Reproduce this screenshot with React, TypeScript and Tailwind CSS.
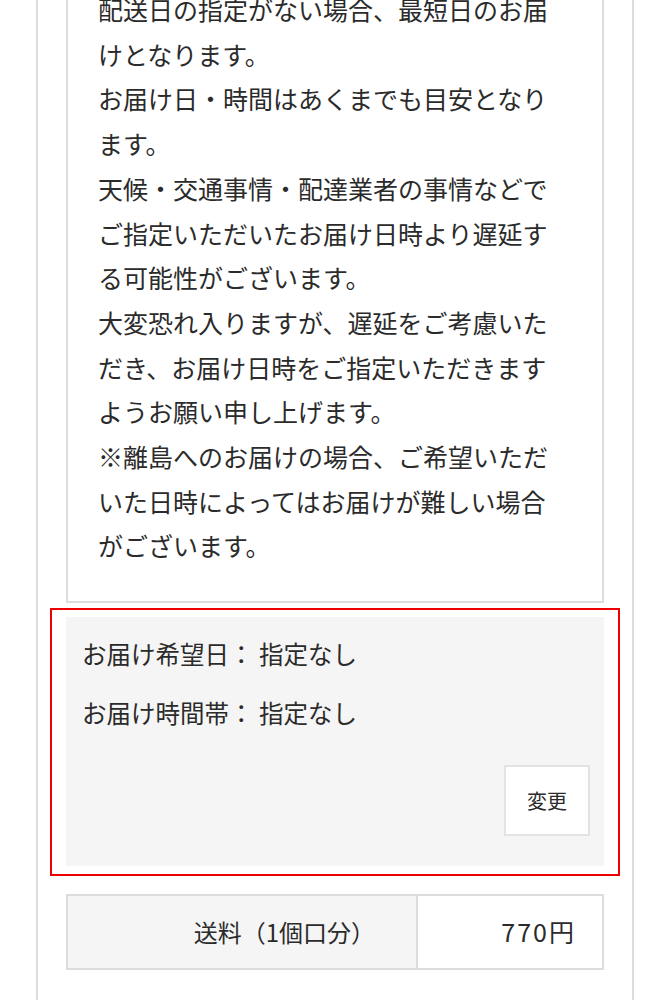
export default function App() {
  const notes = [
    '配送日の指定がない場合、最短日のお届けとなります。',
    'お届け日・時間はあくまでも目安となります。',
    '天候・交通事情・配達業者の事情などでご指定いただいたお届け日時より遅延する可能性がございます。',
    '大変恐れ入りますが、遅延をご考慮いただき、お届け日時をご指定いただきますようお願い申し上げます。',
    '※離島へのお届けの場合、ご希望いただいた日時によってはお届けが難しい場合がございます。',
  ]

  return (
    <div className="min-h-screen bg-white flex justify-center overflow-hidden font-['Noto_Sans_CJK_JP','Noto_Sans',sans-serif] text-[#2b2b2b]">
      {/* Frame */}
      <div className="w-[598px] min-h-screen border-x-2 border-[#dddddd] px-[28px]">
        {/* Notes box */}
        <div className="-mt-[13px] border-x-2 border-b-2 border-[#dddddd] pl-[30px] pb-[33px]">
          <div className="w-[460px] text-[25px] leading-[44.7px]">
            {notes.map((n) => (
              <p key={n}>{n}</p>
            ))}
          </div>
        </div>

        {/* Highlighted delivery panel */}
        <div className="mt-[5px] -mx-[16px] border-2 border-[#ee0000] px-[14px] pt-[7px] pb-[8px]">
          <div className="bg-[#f5f5f5] pl-4 pr-[14px] pt-5 pb-[30px]">
            <p className="text-[24.5px] leading-[34px]">お届け希望日： 指定なし</p>
            <p className="mt-[25px] text-[24.5px] leading-[34px]">お届け時間帯： 指定なし</p>
            <div className="mt-[35px] flex justify-end">
              <button className="w-[86px] h-[71px] bg-white border-2 border-[#e3e3e3] text-[20px] flex items-center justify-center">
                変更
              </button>
            </div>
          </div>
        </div>

        {/* Shipping table */}
        <div className="mt-[18px] flex border-2 border-[#dddddd] h-[76px]">
          <div className="w-[350px] bg-[#f5f5f5] border-r-2 border-[#dddddd] flex items-center justify-end pr-[41px] text-[24px]">
            送料（1個口分）
          </div>
          <div className="flex-1 flex items-center justify-end pr-[28px] text-[25px]">
            <span className="tracking-[2px]">770</span>円
          </div>
        </div>
      </div>
    </div>
  )
}
